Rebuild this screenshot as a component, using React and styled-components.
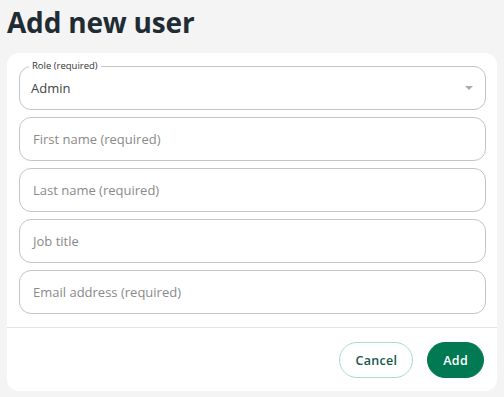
import styled, { createGlobalStyle } from "styled-components";

const GlobalStyle = createGlobalStyle`
  body {
    margin: 0;
    background: #f4f4f4;
    font-family: "Open Sans", "Liberation Sans", sans-serif;
  }
`;

const fields = [
  "First name (required)",
  "Last name (required)",
  "Job title",
  "Email address (required)",
];

export default function App() {
  return (
    <>
      <GlobalStyle />
      <Page>
        <Title>Add new user</Title>
        <Card>
          <Fields>
            <Field>
              <FloatLabel>Role (required)</FloatLabel>
              <Value>Admin</Value>
              <Caret />
            </Field>
            {fields.map((f) => (
              <Field key={f}>
                <Placeholder>{f}</Placeholder>
              </Field>
            ))}
          </Fields>
          <Footer>
            <Btn>Cancel</Btn>
            <Btn primary>Add</Btn>
          </Footer>
        </Card>
      </Page>
    </>
  );
}

const Page = styled.div`
  padding: 0 7px;
  width: 490px;
`;

const Title = styled.h1`
  margin: 0;
  padding-top: 2px;
  height: 51px;
  font-size: 28px;
  font-weight: 700;
  color: #1f2c33;
  line-height: 40px;
  letter-spacing: -0.2px;
`;

const Card = styled.div`
  background: #fff;
  border-radius: 12px;
`;

const Fields = styled.div`
  display: flex;
  flex-direction: column;
  gap: 7px;
  padding: 13px 11px 13px 12px;
  border-bottom: 1px solid #e2e2e2;
`;

const Field = styled.div`
  position: relative;
  height: 44px;
  box-sizing: border-box;
  border: 1px solid #c4c4c4;
  border-radius: 12px;
  display: flex;
  align-items: center;
  padding: 0 13px;
`;

const FloatLabel = styled.span`
  position: absolute;
  top: -7px;
  left: 9px;
  padding: 0 3px;
  background: #fff;
  font-size: 9.5px;
  line-height: 12px;
  color: #333;
`;

const Value = styled.span`
  font-size: 13px;
  color: #3f3f3f;
  flex: 1;
  margin-left: -2px;
`;

const Placeholder = styled.span`
  font-size: 13px;
  color: #8a8a8a;
`;

const Caret = styled.span`
  width: 0;
  height: 0;
  border-left: 4px solid transparent;
  border-right: 4px solid transparent;
  border-top: 4px solid #aaa;
  margin-right: -1px;
`;

const Footer = styled.div`
  display: flex;
  justify-content: flex-end;
  gap: 14px;
  padding: 14px 13px 13px;
`;

const Btn = styled.button`
  height: 36px;
  border-radius: 18px;
  padding: 0 15px;
  font-family: inherit;
  font-size: 12.5px;
  font-weight: 600;
  letter-spacing: 0.3px;
  cursor: pointer;
  border: 1px solid ${(p) => (p.primary ? "#017a53" : "#a9dcc6")};
  background: ${(p) => (p.primary ? "#017a53" : "#fff")};
  color: ${(p) => (p.primary ? "#fff" : "#15574a")};
`;
